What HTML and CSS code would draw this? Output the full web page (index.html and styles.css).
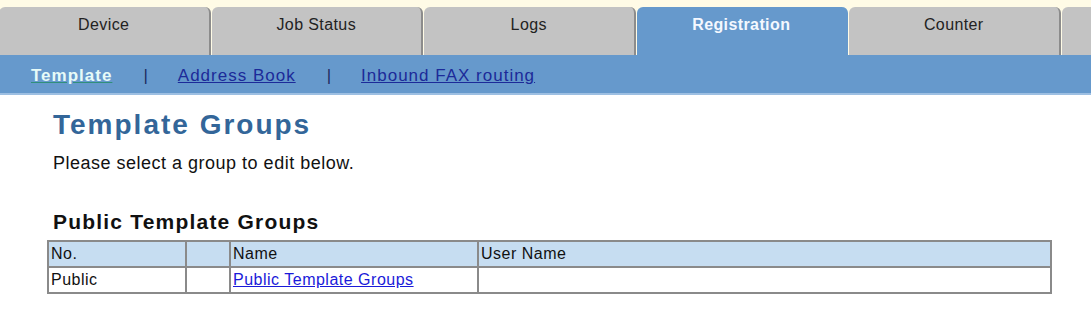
FILE: index.html
```html
<!DOCTYPE html>
<html>
	<head>
		<meta charset="UTF-8">
		<title>Template Groups</title>
		<link rel="stylesheet" href="styles.css">
	</head>
	<body>
		<div class="tabs">
			<a class="tab" href="#">Device</a>
			<a class="tab" href="#">Job Status</a>
			<a class="tab" href="#">Logs</a>
			<a class="tab active" href="#">Registration</a>
			<a class="tab" href="#">Counter</a>
			<a class="tab" href="#"></a>
		</div>
		<div class="subnav">
			<a class="current" href="#">Template</a>
			<span class="sep">|</span>
			<a href="#">Address Book</a>
			<span class="sep">|</span>
			<a href="#">Inbound FAX routing</a>
		</div>
		<div class="content">
			<h1>Template Groups</h1>
			<p class="note">Please select a group to edit below.</p>
			<h2>Public Template Groups</h2>
			<table class="list">
				<tr class="head">
					<td class="c-no">No.</td>
					<td class="c-blank"></td>
					<td class="c-name">Name</td>
					<td>User Name</td>
				</tr>
				<tr>
					<td>Public</td>
					<td></td>
					<td><a href="#">Public Template Groups</a></td>
					<td></td>
				</tr>
			</table>
		</div>
	</body>
</html>
```

FILE: styles.css
```css
body{
	margin:0;
	background:#fff;
	font-family:"Liberation Sans", Arial, sans-serif;
	color:#111;
}
.tabs{
	display:flex;
	background:#fffbe6;
	padding-top:7px;
	height:48px;
	overflow:hidden;
}
.tab{
	flex:0 0 211.5px;
	margin-right:1px;
	height:48px;
	box-sizing:border-box;
	padding-top:9px;
	background:#c3c3c3;
	border-right:2px solid #8c8c8c;
	border-radius:6px 6px 0 0;
	text-align:center;
	font-size:16px;
	letter-spacing:0.4px;
	color:#222;
	text-decoration:none;
}
.tab:first-child{
	margin-left:-1px;
}
.tab.active{
	background:#6699cc;
	border-right-color:#6699cc;
	color:#f4f8ff;
	font-weight:bold;
}
.subnav{
	display:flex;
	align-items:center;
	height:35px;
	padding:3px 0 0 31px;
	background:#6699cc;
	border-bottom:2px solid #9dbfe2;
	font-size:17px;
	letter-spacing:1px;
}
.subnav a{
	color:#1c2a99;
}
.subnav a.current{
	color:#e6fbf8;
	font-weight:bold;
	text-decoration-color:#2f8f7a;
}
.sep{
	margin:0 29px 0 31px;
	color:#1c2a60;
}
.content{
	padding-left:53px;
}
h1{
	margin:14px 0 0;
	font-size:28px;
	letter-spacing:2px;
	color:#336699;
}
.note{
	margin:12px 0 0;
	font-size:18px;
	letter-spacing:0.5px;
}
h2{
	margin:36px 0 0;
	font-size:21px;
	letter-spacing:1.2px;
	color:#111;
}
.list{
	margin:6px 0 0 -6px;
	width:1005px;
	border-collapse:collapse;
	border:2px solid #7a7a7a;
	font-size:16px;
	letter-spacing:0.5px;
}
.list td{
	border:2px solid #8a8a8a;
	height:24px;
	padding:0 2px;
}
.list .head td{
	background:#c6ddf1;
}
.c-no{
	width:132px;
}
.c-blank{
	width:38px;
}
.c-name{
	width:242px;
}
.list a{
	color:#1a1ad9;
}
```
